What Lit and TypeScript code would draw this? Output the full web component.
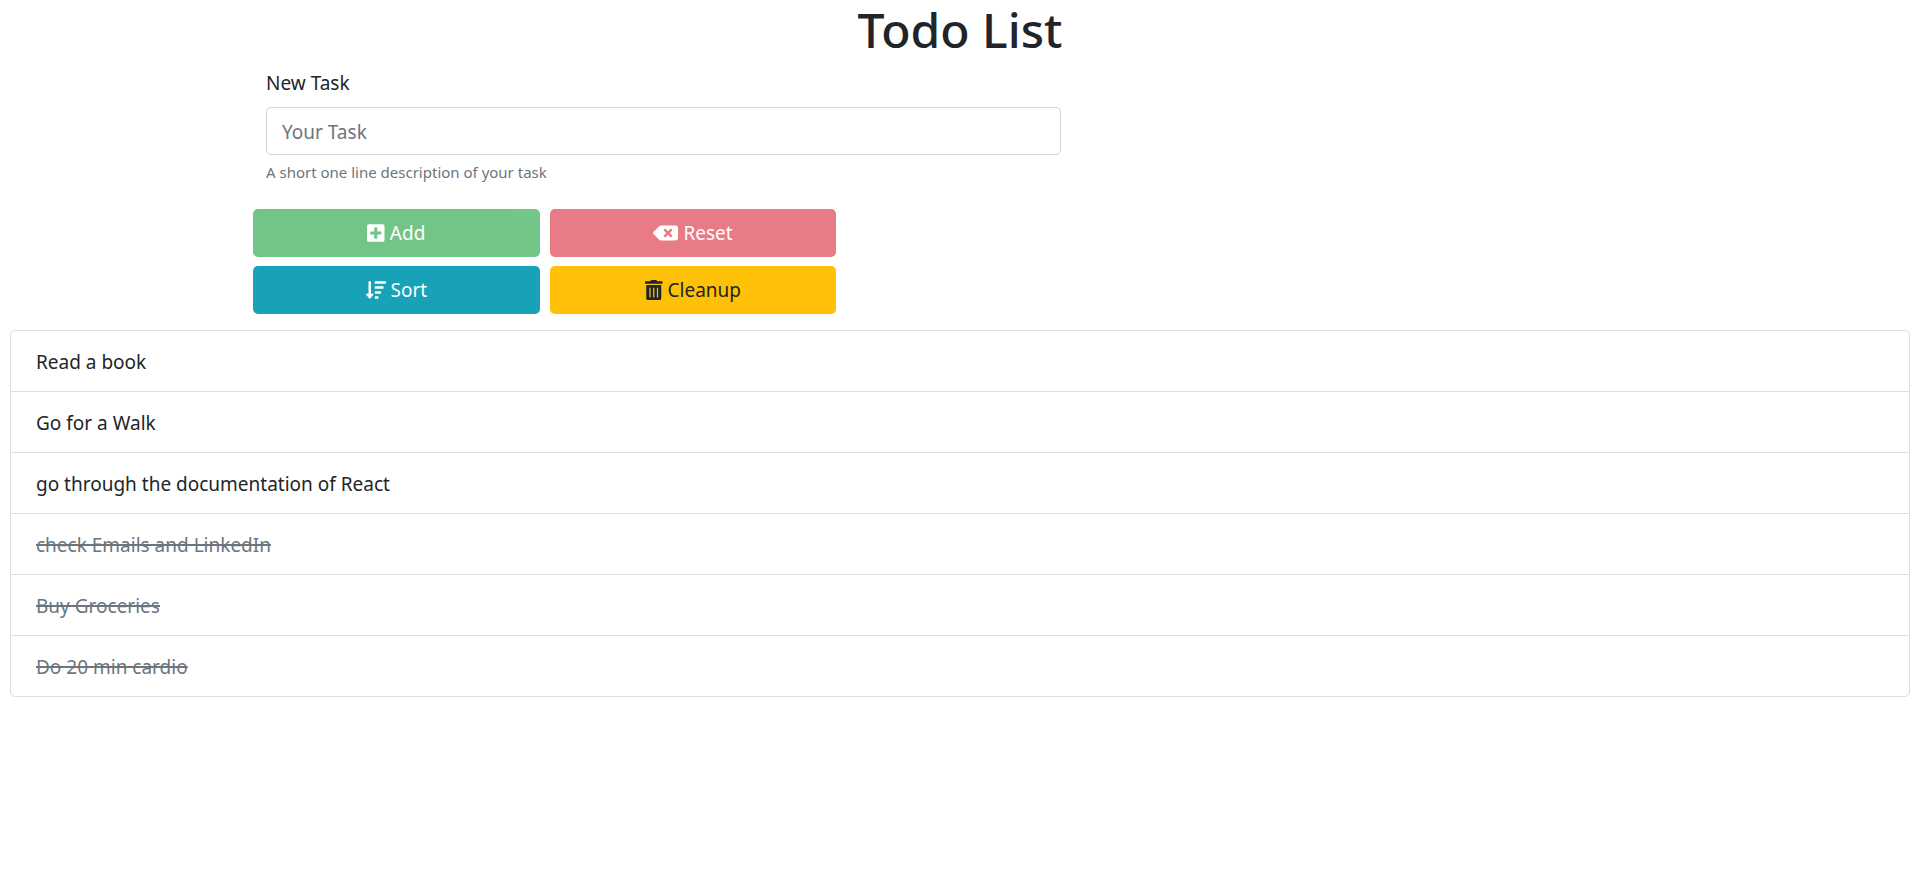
import { LitElement, html, css, svg } from "lit";
import { customElement, state } from "lit/decorators.js";
import { classMap } from "lit/directives/class-map.js";

interface Task {
  title: string;
  done: boolean;
}

const icons = {
  add: {
    viewBox: "0 0 448 512",
    path: "M400 32H48C21.5 32 0 53.5 0 80v352c0 26.5 21.5 48 48 48h352c26.5 0 48-21.5 48-48V80c0-26.5-21.5-48-48-48zm-32 252c0 6.6-5.4 12-12 12h-92v92c0 6.6-5.4 12-12 12h-56c-6.6 0-12-5.4-12-12v-92H92c-6.6 0-12-5.4-12-12v-56c0-6.6 5.4-12 12-12h92v-92c0-6.6 5.4-12 12-12h56c6.6 0 12 5.4 12 12v92h92c6.6 0 12 5.4 12 12v56z",
  },
  reset: {
    viewBox: "0 0 640 512",
    path: "M576 64H205.26A63.97 63.97 0 0 0 160 82.75L9.37 233.37c-12.5 12.5-12.5 32.76 0 45.25L160 429.25c12 12 28.28 18.75 45.25 18.75H576c35.35 0 64-28.65 64-64V128c0-35.35-28.65-64-64-64zm-84.69 254.06c6.25 6.25 6.25 16.38 0 22.63l-22.62 22.62c-6.25 6.25-16.38 6.25-22.63 0L384 301.25l-62.06 62.06c-6.25 6.25-16.38 6.25-22.63 0l-22.62-22.62c-6.25-6.25-6.25-16.38 0-22.63L338.75 256l-62.06-62.06c-6.25-6.25-6.25-16.38 0-22.63l22.62-22.62c6.25-6.25 16.38-6.25 22.63 0L384 210.75l62.06-62.06c6.25-6.25 16.38-6.25 22.63 0l22.62 22.62c6.25 6.25 6.25 16.38 0 22.63L429.25 256l62.06 62.06z",
  },
  sort: {
    viewBox: "0 0 512 512",
    path: "M304 416h-64a16 16 0 0 0-16 16v32a16 16 0 0 0 16 16h64a16 16 0 0 0 16-16v-32a16 16 0 0 0-16-16zm-128-64h-48V48a16 16 0 0 0-16-16H80a16 16 0 0 0-16 16v304H16c-14.19 0-21.37 17.24-11.29 27.31l80 96a16 16 0 0 0 22.62 0l80-96C197.35 369.26 190.22 352 176 352zm256-192H240a16 16 0 0 0-16 16v32a16 16 0 0 0 16 16h192a16 16 0 0 0 16-16v-32a16 16 0 0 0-16-16zm-64 128H240a16 16 0 0 0-16 16v32a16 16 0 0 0 16 16h128a16 16 0 0 0 16-16v-32a16 16 0 0 0-16-16zM496 32H240a16 16 0 0 0-16 16v32a16 16 0 0 0 16 16h256a16 16 0 0 0 16-16V48a16 16 0 0 0-16-16z",
  },
  cleanup: {
    viewBox: "0 0 448 512",
    path: "M32 464a48 48 0 0 0 48 48h288a48 48 0 0 0 48-48V128H32zm272-256a16 16 0 0 1 32 0v224a16 16 0 0 1-32 0zm-96 0a16 16 0 0 1 32 0v224a16 16 0 0 1-32 0zm-96 0a16 16 0 0 1 32 0v224a16 16 0 0 1-32 0zM432 32H312l-9.4-18.7A24 24 0 0 0 281.1 0H166.8a23.72 23.72 0 0 0-21.4 13.3L136 32H16A16 16 0 0 0 0 48v32a16 16 0 0 0 16 16h416a16 16 0 0 0 16-16V48a16 16 0 0 0-16-16z",
  },
};

@customElement("app-root")
export class AppRoot extends LitElement {
  @state() private draft = "";

  @state() private tasks: Task[] = [
    { title: "Read a book", done: false },
    { title: "Go for a Walk", done: false },
    { title: "go through the documentation of React", done: false },
    { title: "check Emails and LinkedIn", done: true },
    { title: "Buy Groceries", done: true },
    { title: "Do 20 min cardio", done: true },
  ];

  static styles = css`
    :host {
      display: block;
      color: #212529;
      background: #fff;
      font-family: "Segoe UI", "Noto Sans", "Liberation Sans", sans-serif;
      font-size: 19px;
      line-height: 30px;
    }
    *,
    *::before,
    *::after {
      box-sizing: border-box;
    }
    .title {
      margin: 0 0 9px;
      font-size: 48px;
      font-weight: 500;
      line-height: 59px;
      text-align: center;
    }
    .form {
      max-width: 1424px;
      margin: 0 auto;
    }
    .field {
      width: calc(100% * 7 / 12);
      padding: 0 18px;
      margin-bottom: 25px;
    }
    .label {
      display: block;
      margin-bottom: 9px;
    }
    .input {
      display: block;
      width: 100%;
      height: 48px;
      padding: 9px 15px 7px;
      border: 1px solid #ced4da;
      border-radius: 5px;
      background: #fff;
      color: #495057;
      font: inherit;
    }
    .input::placeholder {
      color: #6c757d;
      opacity: 1;
    }
    .help {
      display: block;
      margin-top: 5px;
      color: #6c757d;
      font-size: 15px;
      line-height: 24px;
    }
    .actions {
      display: grid;
      grid-template-columns: 1fr 1fr;
      gap: 9px 10px;
      width: calc(100% * 5 / 12);
      padding: 0 5px;
    }
    .button {
      display: flex;
      align-items: center;
      justify-content: center;
      gap: 5px;
      height: 48px;
      padding: 0 15px;
      border: 0;
      border-radius: 5px;
      color: #fff;
      font: inherit;
      cursor: pointer;
    }
    .button:disabled {
      opacity: 0.65;
      cursor: default;
    }
    .icon {
      height: 20px;
      fill: currentColor;
    }
    .success {
      background: #28a745;
    }
    .danger {
      background: #dc3545;
    }
    .info {
      background: #17a2b8;
    }
    .warning {
      background: #ffc107;
      color: #212529;
    }
    .list {
      margin: 16px 10px;
      padding: 0;
      border: 1px solid #dfdfdf;
      border-radius: 5px;
      list-style: none;
    }
    .item {
      padding: 16px 25px 14px;
      cursor: pointer;
    }
    .item + .item {
      border-top: 1px solid #dfdfdf;
    }
    .done {
      color: #6c757d;
      text-decoration: line-through;
      text-decoration-thickness: 2px;
    }
  `;

  private icon(name: keyof typeof icons) {
    const { viewBox, path } = icons[name];
    return html`<svg class="icon" viewBox=${viewBox} aria-hidden="true">
      ${svg`<path d=${path}></path>`}
    </svg>`;
  }

  private onInput(event: Event) {
    this.draft = (event.target as HTMLInputElement).value;
  }

  private add(event: Event) {
    event.preventDefault();
    if (!this.draft) return;
    this.tasks = [{ title: this.draft, done: false }, ...this.tasks];
    this.draft = "";
  }

  private reset() {
    this.draft = "";
  }

  private sort() {
    this.tasks = [...this.tasks].sort((a, b) => Number(a.done) - Number(b.done));
  }

  private cleanup() {
    this.tasks = this.tasks.filter((task) => !task.done);
  }

  private toggle(task: Task) {
    this.tasks = this.tasks.map((t) => (t === task ? { ...t, done: !t.done } : t));
  }

  render() {
    const empty = this.draft === "";
    return html`
      <h1 class="title">Todo List</h1>
      <form class="form" @submit=${this.add}>
        <div class="field">
          <label class="label" for="task">New Task</label>
          <input
            class="input"
            id="task"
            type="text"
            placeholder="Your Task"
            autocomplete="off"
            aria-describedby="task-help"
            .value=${this.draft}
            @input=${this.onInput}
          />
          <small class="help" id="task-help">A short one line description of your task</small>
        </div>
        <div class="actions">
          <button class="button success" type="submit" ?disabled=${empty}>
            ${this.icon("add")}<span>Add</span>
          </button>
          <button class="button danger" type="button" ?disabled=${empty} @click=${this.reset}>
            ${this.icon("reset")}<span>Reset</span>
          </button>
          <button class="button info" type="button" @click=${this.sort}>
            ${this.icon("sort")}<span>Sort</span>
          </button>
          <button class="button warning" type="button" @click=${this.cleanup}>
            ${this.icon("cleanup")}<span>Cleanup</span>
          </button>
        </div>
      </form>
      <ul class="list">
        ${this.tasks.map(
          (task) => html`<li
            class=${classMap({ item: true, done: task.done })}
            @click=${() => this.toggle(task)}
          >${task.title}</li>`
        )}
      </ul>
    `;
  }
}
